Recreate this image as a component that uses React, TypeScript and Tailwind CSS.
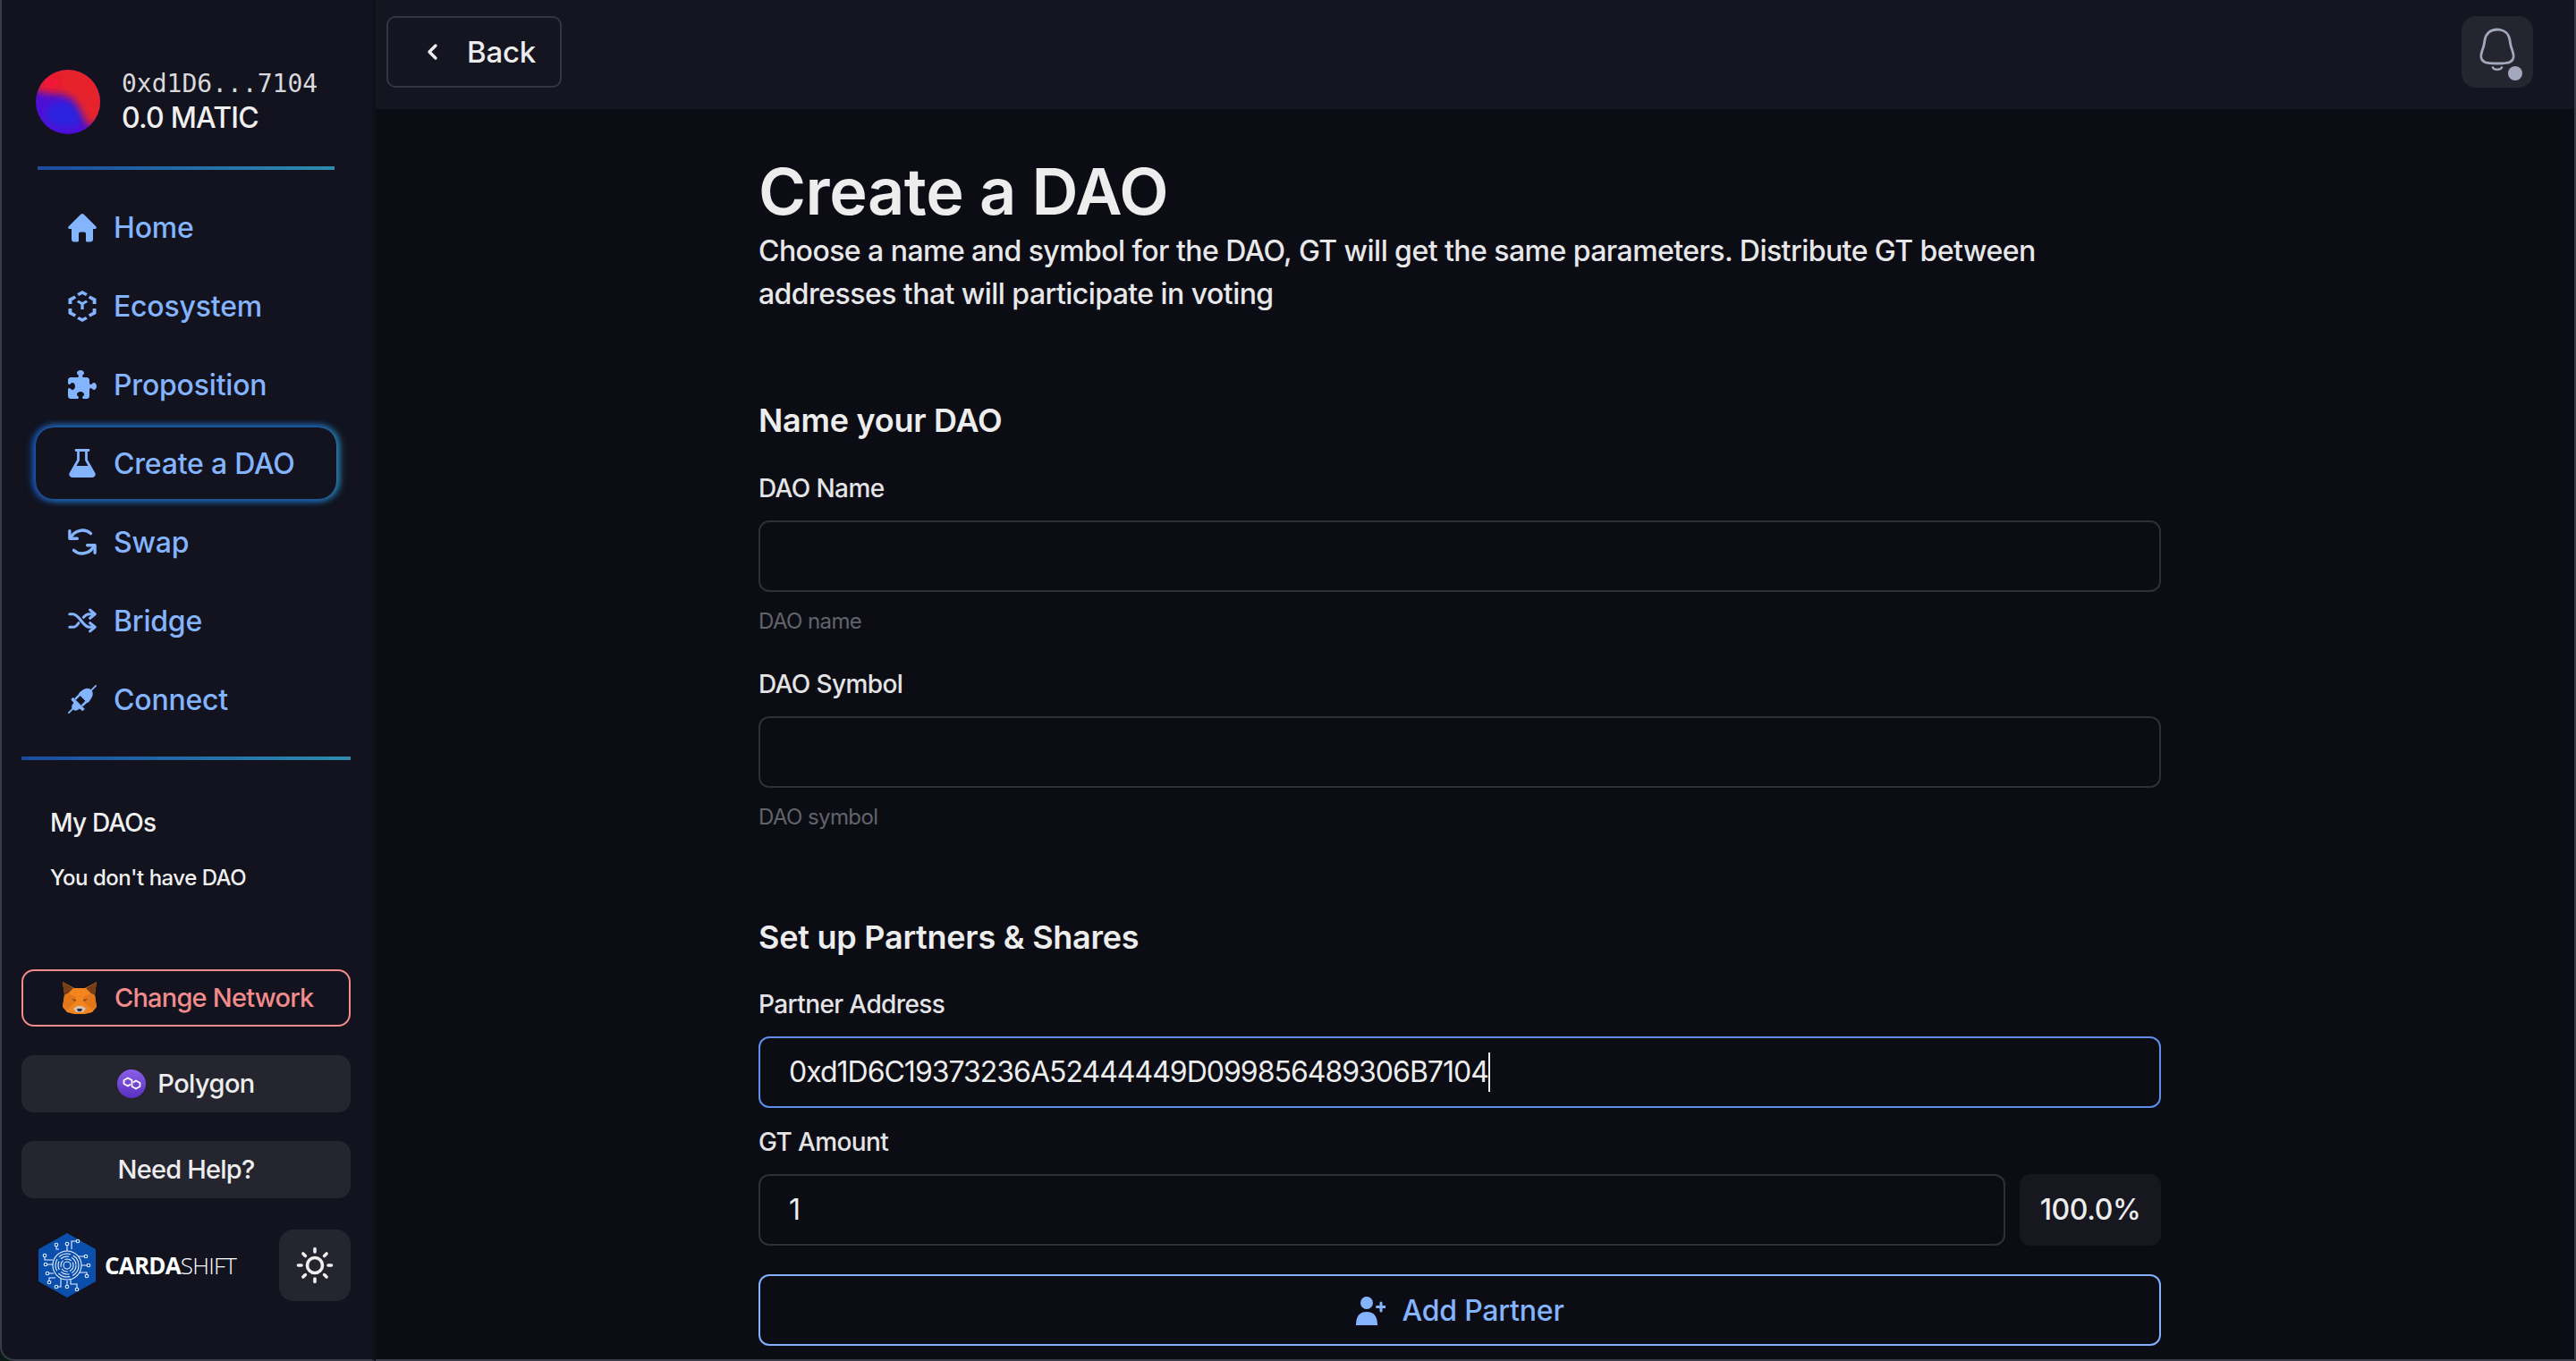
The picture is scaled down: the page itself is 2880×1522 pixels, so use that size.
import React from "react";
import { FaPuzzlePiece } from "react-icons/fa6";

const font = "font-['Inter','Noto_Sans',sans-serif]";
const BLUE = "#85b4ff";

function HomeIcon() {
  return (
    <svg width="33" height="33" viewBox="0 0 32 32" fill={BLUE}>
      <path d="M16 0.500c.6 0 1.100.2 1.500.6l13.800 13.600c1 1 .4 2.800-1.100 2.800H28v11.500c0 1.700-1.300 3-3 3h-3.500c-1 0-1.500-.7-1.500-1.500V23c0-1.200-.8-2-2-2h-4c-1.200 0-2 .8-2 2v7.500c0 .8-.6 1.500-1.500 1.500H7c-1.700 0-3-1.300-3-3V17.500H1.800c-1.500 0-2.100-1.800-1.100-2.800L14.500 1.100c.4-.4.900-.6 1.500-.6z" />
    </svg>
  );
}

function FlaskIcon() {
  return (
    <svg width="32" height="32" viewBox="0 0 32 32">
      <path d="M9 1.500h14M11.500 2v10.500L3 27.500c-.8 1.500.2 3 2 3h22c1.800 0 2.800-1.500 2-3l-8.500-15V2" fill="none" stroke={BLUE} strokeWidth="2.800" strokeLinecap="round" strokeLinejoin="round" />
      <path d="M9 19h14l6.500 11.500h-27z" fill={BLUE} />
    </svg>
  );
}

function EcoIcon() {
  return (
    <svg width="33" height="37" viewBox="0 0 33 37" fill={BLUE}>
      <path d="M16.500 0.500l6 3.300-2 2.800-4-2.100-4 2.100-2-2.800z" />
      <path d="M16.500 36.500l6-3.300-2-2.800-4 2.100-4-2.100-2 2.800z" />
      <path d="M25.500 6l7 3.800v6h-4v-3.800l-5-2.800z" />
      <path d="M7.500 6l-7 3.800v6h4v-3.800l5-2.800z" />
      <path d="M32.500 21v6.200L25.500 31l-2-3.200 5-2.700V21z" />
      <path d="M0.500 21v6.200L7.500 31l2-3.200-5-2.700V21z" />
      <path d="M10 13.500l2.300-2 4.200 2.400 4.200-2.400 2.300 2-4.800 3V22h-3.400v-5.500z" />
    </svg>
  );
}

function SwapIcon() {
  return (
    <svg width="34" height="32" viewBox="0 0 34 32" fill="none" stroke={BLUE} strokeWidth="3.600" strokeLinecap="round" strokeLinejoin="round">
      <path d="M2 3v9h9" />
      <path d="M3 11.500C7 2.500 19-1 27 6" />
      <path d="M32 29v-9h-9" />
      <path d="M31 20.500C27 29.500 15 33 7 26" />
    </svg>
  );
}

function ShuffleIcon() {
  return (
    <svg width="35" height="30" viewBox="0 0 35 30" fill="none" stroke={BLUE} strokeWidth="3.400" strokeLinecap="round" strokeLinejoin="round">
      <path d="M2 7h4c8 0 12 16 20 16h6" />
      <path d="M2 23h4c3 0 5-2 7-5" />
      <path d="M19 11c2-2.500 4-4 7-4h6" />
      <path d="M27 2l6 5-6 5" />
      <path d="M27 18l6 5-6 5" />
    </svg>
  );
}

function PlugIcon() {
  return (
    <svg width="36" height="36" viewBox="0 0 36 36" fill={BLUE} stroke={BLUE} strokeLinecap="round">
      <path d="M35 1l-7 7" strokeWidth="2" />
      <path d="M1 35l7-7" strokeWidth="2" />
      <path d="M15 9.500l4-3c4-2.500 8-2 10 0s2.500 6 0 10l-3 4.500c-.7 1-1.800 1-2.600.2l-8.800-9c-.8-.8-.6-2 .4-2.700z" strokeWidth="1" />
      <path d="M4 19.500c-.7-.7-.7-1.700 0-2.400l1.500-1 14 14-1 1.500c-.7.7-1.700.7-2.400 0z" strokeWidth="1" transform="translate(1 0)" />
      <path d="M8 22l-1.500 2c-2 3-1.500 5 0 6.500s3.500 2 6.500 0l2-1.500z" strokeWidth="1" />
      <path d="M10 17l5-5M18.500 25.500l5-5" strokeWidth="3" />
    </svg>
  );
}

function PersonPlus() {
  return (
    <svg width="34" height="34" viewBox="0 0 34 34" fill={BLUE}>
      <circle cx="13" cy="8" r="7" />
      <path d="M1 33c0-10 4-15 12-15s12 5 12 15z" />
      <path d="M29 8v9M24.500 12.500h9" stroke={BLUE} strokeWidth="3" strokeLinecap="round" />
    </svg>
  );
}

function Fox() {
  return (
    <svg width="40" height="38" viewBox="0 0 40 38">
      <path d="M1 1l15 8h8l15-8-2 14 2 14-5 6-8 2H14l-8-2-5-6 2-14z" fill="#f0841f" />
      <path d="M1 1l12 7-6 6-4 2zM39 1L27 8l6 6 4 2z" fill="#763d16" />
      <path d="M13 8h14l-3 8-4 1-4-1z" fill="#f6851b" />
      <path d="M3 16l4-2 9 4-1 6-9 8-5-3z" fill="#e2761b" />
      <path d="M37 16l-4-2-9 4 1 6 9 8 5-3z" fill="#e2761b" />
      <path d="M11 20l5 1-1 2zM29 20l-5 1 1 2z" fill="#763d16" />
      <path d="M13 31l4-3h6l4 3-3 4h-8z" fill="#d7c1b3" />
      <path d="M17 31h6l-1 3h-4z" fill="#233447" />
    </svg>
  );
}

function PolygonLogo() {
  return (
    <svg width="32" height="32" viewBox="0 0 32 32">
      <defs>
        <linearGradient id="poly" x1="0" y1="0" x2="0" y2="1">
          <stop offset="0" stopColor="#8a5fe6" />
          <stop offset="1" stopColor="#5a2fc0" />
        </linearGradient>
      </defs>
      <circle cx="16" cy="16" r="16" fill="url(#poly)" />
      <path d="M16 16.500l-3 2-4.500-2.500v-4l4.500-2.500 4.500 2.500v7l4.500 2.500 4.500-2.500v-4l-4.500-2.500-3 2" transform="translate(-1 0)" fill="none" stroke="#fff" strokeWidth="1.800" strokeLinejoin="round" />
    </svg>
  );
}

function CardaLogo() {
  const nodes = [
    [7, 25], [10, 45], [8, 35], [12, 55], [20, 13], [32, 12], [44, 9], [43, 63], [32, 60], [20, 60], [53, 26], [56, 36], [54, 48],
  ];
  return (
    <svg width="64" height="72" viewBox="0 0 64 72">
      <path d="M32 0l32 18v36L32 72 0 54V18z" fill="#0b4fad" />
      <g fill="none" stroke="#e8f0ff" strokeWidth="1.100">
        <circle cx="32" cy="36" r="16" />
        <circle cx="32" cy="36" r="13" strokeDasharray="14 3" />
        <circle cx="32" cy="36" r="10" strokeDasharray="10 3" />
        <circle cx="32" cy="36" r="7" strokeDasharray="8 2" />
        <circle cx="32" cy="36" r="4" />
        <path d="M7 25v5h9M8 35h8M10 45h7M12 55v-5h7M20 13v5h3M32 12v8M44 9h-7v9M43 63v-6h-7v-5M32 60v-7M20 60h5v-9M53 26h-8M56 36h-8M54 48v-4h-8" />
        {nodes.map(([x, y]) => (
          <circle key={`${x}-${y}`} cx={x} cy={y} r="1.800" fill="#0b4fad" />
        ))}
      </g>
    </svg>
  );
}

function Avatar() {
  return (
    <svg width="72" height="72" viewBox="0 0 72 72">
      <defs>
        <clipPath id="av"><circle cx="36" cy="36" r="36" /></clipPath>
        <filter id="b1" x="-50%" y="-50%" width="200%" height="200%"><feGaussianBlur stdDeviation="4" /></filter>
      </defs>
      <g clipPath="url(#av)">
        <rect width="72" height="72" fill="#4f0ed4" />
        <ellipse cx="33" cy="50" rx="22" ry="15" fill="#2a22e0" filter="url(#b1)" />
        <path d="M-5 18C5 30 20 24 34 29 50 35 50 52 60 64L85 50V-10H-5z" fill="#e6202c" filter="url(#b1)" />
        <ellipse cx="18" cy="15" rx="9" ry="6" fill="#f5103f" filter="url(#b1)" />
      </g>
    </svg>
  );
}

function Bell() {
  return (
    <svg width="80" height="80" viewBox="0 0 80 80" fill="none">
      <path d="M40 15c-8 0-13 5-14 12-.6 5-1 7-3 12-2 6-2 10 3 12.500 3 1.200 9 1.500 14 1.500s11-.3 14-1.500c5-2.500 5-6.500 3-12.500-2-5-2.400-7-3-12-1-7-6-12-14-12z" stroke="#a3a8bd" strokeWidth="2.800" />
      <path d="M35 57.500c1.500 3 8.500 3 10 0" stroke="#a3a8bd" strokeWidth="2.600" strokeLinecap="round" />
      <circle cx="60" cy="64" r="8" fill="#a3a8bd" />
    </svg>
  );
}

function Sun() {
  return (
    <svg width="42" height="42" viewBox="0 0 42 42" fill="none" stroke="#efefef" strokeWidth="3.600" strokeLinecap="round">
      <circle cx="21" cy="21" r="8.500" />
      <path d="M21 2.500v3.500M21 36v3.500M2.500 21H6M36 21h3.500M7.900 7.900l2.500 2.500M31.600 31.600l2.500 2.500M7.900 34.100l2.500-2.500M31.600 10.400l2.500-2.500" />
    </svg>
  );
}

const NAV: [string, React.ReactNode][] = [
  ["Home", <HomeIcon />],
  ["Ecosystem", <EcoIcon />],
  ["Proposition", <FaPuzzlePiece size={32} color={BLUE} />],
  ["Create a DAO", <FlaskIcon />],
  ["Swap", <SwapIcon />],
  ["Bridge", <ShuffleIcon />],
  ["Connect", <PlugIcon />],
];

function NavItem({ label, icon }: { label: string; icon: React.ReactNode }) {
  const active = label === "Create a DAO";
  return (
    <div
      className={`flex h-[80px] w-[336px] items-center rounded-[20px] pl-[36px] ${
        active ? "shadow-[-4px_0_10px_-1px_#1a50b8,4px_0_10px_-1px_#2f88aa,0_-3px_9px_-1px_#2060a8,0_3px_9px_-1px_#2060a8]" : ""
      }`}
    >
      <span className="flex w-[32px] items-center justify-center">{icon}</span>
      <span className="ml-[19px] pt-[2px] text-[32px] leading-[40px] font-medium tracking-[-0.2px] text-[#85b4ff]">{label}</span>
    </div>
  );
}

function Gradient({ className }: { className: string }) {
  return <div className={`h-[4px] bg-gradient-to-r from-[#1c4a9e] to-[#2f8cae] ${className}`} />;
}

function Label({ children, className }: { children: React.ReactNode; className: string }) {
  return <div className={`text-[28px] leading-[36px] font-medium tracking-[-0.6px] text-[#e4e4e6] ${className}`}>{children}</div>;
}

function Helper({ children }: { children: React.ReactNode }) {
  return <div className="mt-[17px] text-[24px] leading-[32px] tracking-[-0.6px] text-[#62636b]">{children}</div>;
}

function SectionTitle({ children, className }: { children: React.ReactNode; className: string }) {
  return <h2 className={`text-[36px] leading-[44px] font-semibold tracking-[-0.25px] text-[#ededee] ${className}`}>{children}</h2>;
}

function Field({ className = "", children }: { className?: string; children?: React.ReactNode }) {
  return (
    <div className={`mt-[18px] flex h-[80px] items-center rounded-[12px] border-2 border-[#2f3036] px-[32px] text-[32px] tracking-[-1px] text-[#ededee] ${className}`}>
      {children}
    </div>
  );
}

export default function App() {
  return (
    <div className={`flex h-[1522px] w-[2880px] overflow-hidden bg-[#0a1a14] ${font}`}>
      <aside className="flex w-[420px] shrink-0 flex-col rounded-bl-[16px] border-b-2 border-l-2 border-r-4 border-[#3a3b47] border-r-[#0f1018] bg-[#12131e] pb-[65px] pl-[22px] text-white">
        <div className="mt-[78px] flex h-[72px] items-center pl-[16px]">
          <Avatar />
          <div className="ml-[24px]">
            <div className="font-['DejaVu_Sans_Mono',monospace] text-[28px] leading-[36px] text-[#d9d9dc]">0xd1D6...7104</div>
            <div className="text-[32px] leading-[40px] font-medium tracking-[-0.8px] text-[#f0f0f0]">0.0 MATIC</div>
          </div>
        </div>
        <Gradient className="mt-[36px] ml-[18px] w-[332px]" />
        <nav className="mt-[24px] ml-[16px] flex flex-col gap-[8px]">
          {NAV.map(([label, icon]) => (
            <NavItem key={label} label={label} icon={icon} />
          ))}
        </nav>
        <Gradient className="mt-[24px] w-[368px]" />
        <div className="mt-[52px] ml-[32px] text-[28px] leading-[36px] font-medium tracking-[-0.8px] text-[#f0f0f0]">My DAOs</div>
        <div className="mt-[28px] ml-[32px] text-[24px] leading-[32px] font-medium tracking-[-0.5px] text-[#f0f0f0]">You don't have DAO</div>
        <div className="mt-auto flex w-[368px] flex-col gap-[32px]">
          <button className="flex h-[64px] items-center rounded-[14px] border-2 border-[#f28b8b] pl-[43px] text-[29px] font-medium tracking-[-0.8px] text-[#f28b8b]">
            <Fox />
            <span className="ml-[19px]">Change Network</span>
          </button>
          <button className="flex h-[64px] items-center justify-center rounded-[14px] bg-[#24252f] text-[29px] font-medium tracking-[-0.6px] text-[#ededee]">
            <PolygonLogo />
            <span className="ml-[13px]">Polygon</span>
          </button>
          <button className="h-[64px] rounded-[14px] bg-[#24252f] text-[29px] font-medium tracking-[-0.8px] text-[#ededee]">Need Help?</button>
        </div>
        <div className="mt-[35px] flex h-[80px] w-[368px] items-center">
          <span className="ml-[19px]"><CardaLogo /></span>
          <span className="ml-[10px] font-['Open_Sans',sans-serif] text-[26px] tracking-[-0.8px] text-white">
            <b className="font-bold">CARDA</b>
            <span className="font-light">SHIFT</span>
          </span>
          <button className="ml-auto flex h-[80px] w-[80px] items-center justify-center rounded-[16px] bg-[#24252f]">
            <Sun />
          </button>
        </div>
      </aside>
      <div className="flex min-w-0 flex-1 flex-col border-r-2 border-b-2 border-[#3a3b47] bg-[#0c0d14]">
        <header className="flex h-[122px] shrink-0 items-start justify-between bg-[#141520] pt-[18px] pr-[46px] pl-[12px]">
          <button className="flex h-[80px] w-[196px] items-center rounded-[10px] border-2 border-[#34353e] pl-[42px] text-[33px] font-medium tracking-[-0.2px] text-[#ededee]">
            <svg width="16" height="22" viewBox="0 0 16 22" fill="none" stroke="#ededee" strokeWidth="3.400" strokeLinecap="round" strokeLinejoin="round">
              <path d="M11 4l-7 7 7 7" />
            </svg>
            <span className="ml-[30px] pt-[2px]">Back</span>
          </button>
          <button className="flex h-[80px] w-[80px] items-center justify-center rounded-[16px] bg-[#24252f]">
            <Bell />
          </button>
        </header>
        <main className="flex flex-col overflow-hidden pt-[52px] pl-[428px]">
          <div className="w-[1568px]">
            <h1 className="text-[72px] leading-[80px] font-semibold tracking-[-0.45px] text-[#ededee]">Create a DAO</h1>
            <p className="mt-[3px] w-[1500px] text-[32px] leading-[48px] font-medium tracking-[-0.55px] text-[#e8e8ea]">
              Choose a name and symbol for the DAO, GT will get the same parameters. Distribute GT between addresses that will participate in voting
            </p>
            <SectionTitle className="mt-[95px]">Name your DAO</SectionTitle>
            <Label className="mt-[36px]">DAO Name</Label>
            <Field />
            <Helper>DAO name</Helper>
            <Label className="mt-[36px]">DAO Symbol</Label>
            <Field />
            <Helper>DAO symbol</Helper>
            <SectionTitle className="mt-[96px]">Set up Partners &amp; Shares</SectionTitle>
            <Label className="mt-[35px]">Partner Address</Label>
            <Field className="border-[#5b8fe8]">
              <span>0xd1D6C19373236A52444449D099856489306B7104</span>
              <span className="h-[44px] w-[2px] bg-[#ededee]" />
            </Field>
            <Label className="mt-[20px]">GT Amount</Label>
            <div className="flex gap-[16px]">
              <Field className="flex-1">1</Field>
              <div className="mt-[18px] flex h-[80px] w-[158px] items-center justify-center rounded-[12px] bg-[#16171f] text-[32px] font-medium tracking-[-0.4px] text-[#ededee]">100.0%</div>
            </div>
            <button className="mt-[32px] flex h-[80px] w-full items-center justify-center rounded-[12px] border-2 border-[#80b0ff] pt-[2px] text-[32px] font-medium tracking-[-0.2px] text-[#85b4ff]">
              <PersonPlus />
              <span className="ml-[18px]">Add Partner</span>
            </button>
          </div>
        </main>
      </div>
    </div>
  );
}
